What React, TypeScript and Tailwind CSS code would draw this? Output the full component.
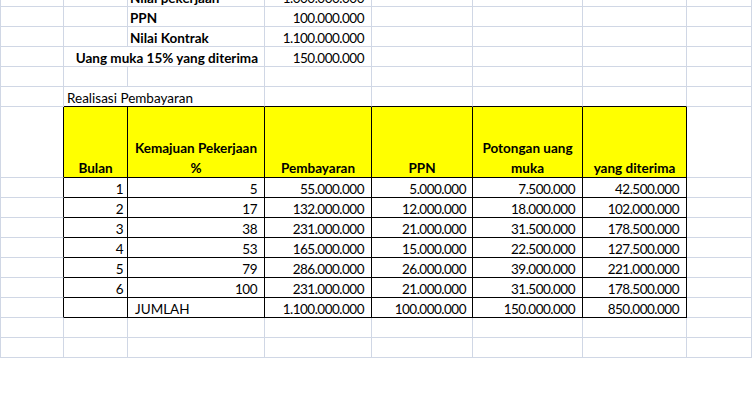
import React from 'react';

type CellProps = {
  children?: React.ReactNode;
  className?: string;
  right?: boolean; // black right border
  bottom?: boolean; // black bottom border
  left?: boolean; // sheet edge line
  wrap?: boolean;
};

const Cell = ({ children, className = '', right, bottom, left, wrap }: CellProps) => (
  <div
    className={`flex items-end overflow-visible border-r border-b ${left ? 'border-l border-l-[#d0d7e5]' : ''} ${
      wrap ? 'whitespace-normal' : 'whitespace-nowrap'
    } ${right ? 'border-r-black' : 'border-r-[#d0d7e5]'} ${
      bottom ? 'border-b-black' : 'border-b-[#d0d7e5]'
    } ${className}`}
  >
    {children}
  </div>
);

const Num = ({ children }: { children: React.ReactNode }) => (
  <span className="tracking-[-0.5px]">{children}</span>
);

const summary = [
  { label: 'Nilai pekerjaan', value: '1.000.000.000' },
  { label: 'PPN', value: '100.000.000' },
  { label: 'Nilai Kontrak', value: '1.100.000.000' },
];

const rows = [
  ['1', '5', '55.000.000', '5.000.000', '7.500.000', '42.500.000'],
  ['2', '17', '132.000.000', '12.000.000', '18.000.000', '102.000.000'],
  ['3', '38', '231.000.000', '21.000.000', '31.500.000', '178.500.000'],
  ['4', '53', '165.000.000', '15.000.000', '22.500.000', '127.500.000'],
  ['5', '79', '286.000.000', '26.000.000', '39.000.000', '221.000.000'],
  ['6', '100', '231.000.000', '21.000.000', '31.500.000', '178.500.000'],
];

const headers = [
  'Bulan',
  'Kemajuan Pekerjaan %',
  'Pembayaran',
  'PPN',
  'Potongan uang muka',
  'yang diterima',
];

const App = () => {
  return (
    <div className="h-[394px] w-[752px] overflow-hidden bg-white font-['Lato',sans-serif] text-[13.5px] leading-[16px] text-black">
      <div className="-mt-[13px] grid grid-cols-[64px_64px_137px_107px_101px_110px_104px_65px] grid-rows-[repeat(6,20px)_71px_repeat(9,20px)]">
        {/* summary block */}
        {summary.map((s) => (
          <React.Fragment key={s.label}>
            <Cell left />
            <Cell />
            <Cell className="pl-[2px] font-bold">{s.label}</Cell>
            <Cell className="justify-end pr-[7px]"><Num>{s.value}</Num></Cell>
            <Cell />
            <Cell />
            <Cell />
            <Cell />
          </React.Fragment>
        ))}
        <Cell left />
        <Cell className="col-span-2 justify-end pr-[6px] font-bold">Uang muka 15% yang diterima</Cell>
        <Cell className="justify-end pr-[7px]"><Num>150.000.000</Num></Cell>
        <Cell />
        <Cell />
        <Cell />
        <Cell />

        <Cell left />
        {[1, 2, 3, 4, 5, 6, 7].map((i) => (
          <Cell key={`e${i}`} />
        ))}

        <Cell left />
        <Cell bottom className="col-span-2 pl-[3px]">Realisasi Pembayaran</Cell>
        <Cell bottom />
        <Cell bottom />
        <Cell bottom />
        <Cell bottom />
        <Cell />

        {/* header */}
        <Cell left right />
        {headers.map((h) => (
          <Cell
            key={h}
            right
            bottom
            wrap
            className="justify-center bg-[#ffff00] px-[2px] text-center font-bold leading-[20px]"
          >
            <span className="-mb-[1px]">{h}</span>
          </Cell>
        ))}
        <Cell />

        {/* data */}
        {rows.map((r) => (
          <React.Fragment key={r[0]}>
            <Cell left right />
            <Cell right bottom className="justify-end pr-[4px]"><Num>{r[0]}</Num></Cell>
            <Cell right bottom className="justify-end pr-[7px]"><Num>{r[1]}</Num></Cell>
            <Cell right bottom className="justify-end pr-[7px]"><Num>{r[2]}</Num></Cell>
            <Cell right bottom className="justify-end pr-[6px]"><Num>{r[3]}</Num></Cell>
            <Cell right bottom className="justify-end pr-[7px]"><Num>{r[4]}</Num></Cell>
            <Cell right bottom className="justify-end pr-[7px]"><Num>{r[5]}</Num></Cell>
            <Cell />
          </React.Fragment>
        ))}
        <Cell left right />
        <Cell right bottom />
        <Cell right bottom className="pl-[7px]">JUMLAH</Cell>
        <Cell right bottom className="justify-end pr-[7px]"><Num>1.100.000.000</Num></Cell>
        <Cell right bottom className="justify-end pr-[6px]"><Num>100.000.000</Num></Cell>
        <Cell right bottom className="justify-end pr-[7px]"><Num>150.000.000</Num></Cell>
        <Cell right bottom className="justify-end pr-[7px]"><Num>850.000.000</Num></Cell>
        <Cell />

        {[0, 1].map((row) => (
          <React.Fragment key={`b${row}`}>
            <Cell left />
            {[1, 2, 3, 4, 5, 6, 7].map((i) => (
              <Cell key={i} />
            ))}
          </React.Fragment>
        ))}
      </div>
    </div>
  );
};

export default App;
